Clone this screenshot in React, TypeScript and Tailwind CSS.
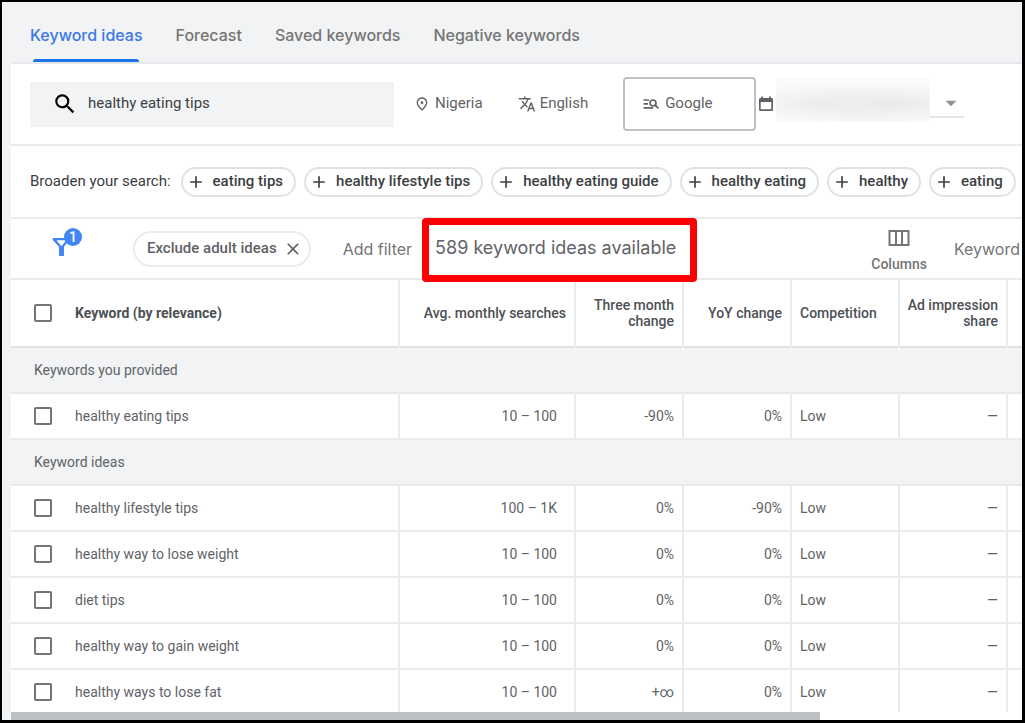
import { useState } from 'react';
import { MdAdd, MdArrowDropDown, MdClose, MdOutlinePlace, MdSearch, MdTranslate } from 'react-icons/md';

interface KeywordRow {
  keyword: string;
  searches: string;
  threeMonth: string;
  yoy: string;
  competition: string;
}

const TABS = ['Keyword ideas', 'Forecast', 'Saved keywords', 'Negative keywords'];

const SUGGESTIONS = [
  'eating tips',
  'healthy lifestyle tips',
  'healthy eating guide',
  'healthy eating',
  'healthy',
  'eating',
];

const PROVIDED: KeywordRow[] = [
  { keyword: 'healthy eating tips', searches: '10 – 100', threeMonth: '-90%', yoy: '0%', competition: 'Low' },
];

const IDEAS: KeywordRow[] = [
  { keyword: 'healthy lifestyle tips', searches: '100 – 1K', threeMonth: '0%', yoy: '-90%', competition: 'Low' },
  { keyword: 'healthy way to lose weight', searches: '10 – 100', threeMonth: '0%', yoy: '0%', competition: 'Low' },
  { keyword: 'diet tips', searches: '10 – 100', threeMonth: '0%', yoy: '0%', competition: 'Low' },
  { keyword: 'healthy way to gain weight', searches: '10 – 100', threeMonth: '0%', yoy: '0%', competition: 'Low' },
  { keyword: 'healthy ways to lose fat', searches: '10 – 100', threeMonth: '+∞', yoy: '0%', competition: 'Low' },
];

const CHECKBOX =
  'block size-[18px] appearance-none rounded-xs border-2 border-[#757575] bg-white checked:bg-[#1a73e8]';

function NetworkIcon() {
  return (
    <svg className="h-4 w-4" viewBox="0 0 16 16" fill="none" stroke="currentColor" strokeWidth="1.7" aria-hidden="true">
      <path d="M0.5 4H6M0.5 7.8H5M0.5 11.8H10" />
      <circle cx="10" cy="7" r="3" />
      <path d="M12.2 9.2L15.4 12.4" />
    </svg>
  );
}

function CalendarIcon() {
  return (
    <svg className="ml-0.5 h-4 w-4" viewBox="0 0 16 16" aria-hidden="true">
      <path
        fill="currentColor"
        fillRule="evenodd"
        d="M3.2 0.5H5V2H11V0.5H12.8V2H13.5C14.4 2 15 2.6 15 3.5V13.5C15 14.4 14.4 15 13.5 15H2.5C1.6 15 1 14.4 1 13.5V3.5C1 2.6 1.6 2 2.5 2H3.2ZM2.7 6V13.3H13.3V6Z"
      />
    </svg>
  );
}

function FilterIcon() {
  return (
    <svg className="h-5 w-5" viewBox="0 0 20 20" aria-hidden="true">
      <path
        fill="#4285f4"
        fillRule="evenodd"
        d="M1.6 1h14.8c1.1 0 1.5 1.1.9 1.9L12 9.8V18c0 .6-.4 1-1 1H8c-.6 0-1-.4-1-1V9.8L.8 2.9C.2 2.1.6 1 1.6 1zM4.4 3.2L9.5 9.2L14.2 3.2z"
      />
    </svg>
  );
}

function ColumnsIcon() {
  return (
    <svg className="h-4 w-[22px]" viewBox="0 0 22 16" fill="none" stroke="currentColor" strokeWidth="2" aria-hidden="true">
      <path d="M1.5 1H20.5V15H1.5ZM8 1V15M14 1V15" />
    </svg>
  );
}

function SectionRow({ title }: { title: string }) {
  return (
    <tr className="h-[46px] border-b-2 border-[#e8e9ec] bg-[#f1f3f4]">
      <th colSpan={8} scope="colgroup" className="pl-[23px] text-left font-normal">
        {title}
      </th>
    </tr>
  );
}

function DataRow({ row }: { row: KeywordRow }) {
  return (
    <tr className="h-[46px] border-b-2 border-[#ebecee]">
      <td className="pl-[23px]">
        <input type="checkbox" aria-label={`Select ${row.keyword}`} className={CHECKBOX} />
      </td>
      <td className="border-r-2 border-[#ebecee]">{row.keyword}</td>
      <td className="border-r-2 border-[#ebecee] pr-[17px] text-right">{row.searches}</td>
      <td className="border-r-2 border-[#ebecee] pr-2 text-right">{row.threeMonth}</td>
      <td className="border-r-2 border-[#ebecee] pr-2 text-right">{row.yoy}</td>
      <td className="border-r-2 border-[#ebecee] pl-2">{row.competition}</td>
      <td className="border-r-2 border-[#ebecee] pr-2 text-right">—</td>
      <td />
    </tr>
  );
}

export default function App() {
  const [activeTab, setActiveTab] = useState(TABS[0]);
  const [query, setQuery] = useState('healthy eating tips');

  return (
    <div className="flex h-screen flex-col overflow-hidden border-t-2 border-r-3 border-b-3 border-l-2 border-black bg-[#f1f3f4] pl-[9px] font-[Roboto,sans-serif] text-sm text-[#5f6368]">
      <nav className="flex h-[62px] shrink-0 gap-[33px] border-b-2 border-[#e6e8eb] pl-[19px] font-[Inter,sans-serif] text-base font-medium">
        {TABS.map((tab) => (
          <button
            key={tab}
            type="button"
            onClick={() => setActiveTab(tab)}
            className={
              tab === activeTab
                ? 'flex flex-col items-center whitespace-nowrap pt-[21px] text-[#3b78e7]'
                : 'flex flex-col items-center whitespace-nowrap pt-[21px] text-[#757575]'
            }
          >
            {tab}
            {tab === activeTab && <span className="mt-auto h-[3px] w-[106px] rounded-t bg-[#1a73e8]" />}
          </button>
        ))}
      </nav>

      <div className="flex h-[82px] shrink-0 items-center border-b-2 border-[#e9eaed] bg-white pl-[19px] text-[15px]">
        <label className="flex h-[45px] w-[364px] items-center gap-2.5 bg-[#f1f3f4] pl-[22px]">
          <MdSearch className="size-[26px] text-black" />
          <input
            type="text"
            aria-label="Keywords"
            value={query}
            onChange={(e) => setQuery(e.target.value)}
            className="min-w-0 flex-1 bg-transparent text-[#3c4043] outline-none"
          />
        </label>
        <button type="button" className="ml-5 flex items-center gap-[5px]">
          <MdOutlinePlace className="size-4" />
          Nigeria
        </button>
        <button type="button" className="ml-[35px] flex items-center gap-1">
          <MdTranslate className="size-[18px]" />
          English
        </button>
        <button
          type="button"
          className="ml-[35px] flex h-[54px] w-[133px] items-center gap-1.5 rounded border-2 border-[#bdc1c6] pl-[18px]"
        >
          <NetworkIcon />
          Google
        </button>
        <CalendarIcon />
        <div className="mt-[14px] ml-0.5 h-11 w-[154px] self-start bg-[#fbfbfb] bg-[radial-gradient(ellipse_at_30%_58%,#ececec,transparent_60%),radial-gradient(ellipse_at_75%_58%,#e9e9e9,transparent_60%)]" />
        <button
          type="button"
          aria-label="Choose date range"
          className="flex h-7 w-[34px] items-center justify-end border-b-2 border-[#e6e6e6] text-[#8c8f93]"
        >
          <MdArrowDropDown className="size-[26px]" />
        </button>
      </div>

      <div className="flex h-[73px] shrink-0 items-center gap-2 overflow-hidden border-b-2 border-[#e9eaed] bg-white pl-[19px] text-[15px] whitespace-nowrap text-[#3c4043]">
        <span className="mr-0.5">Broaden your search:</span>
        {SUGGESTIONS.map((suggestion) => (
          <button
            key={suggestion}
            type="button"
            className="flex h-[30px] shrink-0 items-center gap-[7px] rounded-full border-2 border-[#dfe1e5] pr-[11px] pl-[3px] font-medium"
          >
            <MdAdd className="size-5" />
            {suggestion}
          </button>
        ))}
      </div>

      <div className="flex h-[61px] shrink-0 items-center border-b-2 border-[#e9eaed] bg-white pr-0.5 pl-[41px] whitespace-nowrap">
        <button type="button" aria-label="Filters, 1 applied" className="relative pb-1">
          <FilterIcon />
          <span className="absolute -top-[9px] left-3 flex size-[18px] items-center justify-center rounded-full bg-[#4285f4] text-sm font-medium text-white">
            1
          </span>
        </button>
        <button
          type="button"
          className="ml-[61px] flex h-9 items-center gap-1.5 rounded-full border-2 border-[#ececee] pr-1.5 pl-3 text-[15px] font-medium"
        >
          Exclude adult ideas
          <MdClose className="size-5" />
        </button>
        <button type="button" className="ml-8 font-[Inter,sans-serif] text-base text-[#757575]">
          Add filter
        </button>
        <output className="relative z-10 -mt-px ml-2.5 flex h-16 w-[275px] shrink-0 items-center self-start rounded border-[7px] border-[#ff0000] pb-1 pl-1.5 font-[Inter,sans-serif] text-lg">
          589 keyword ideas available
        </output>
        <button
          type="button"
          className="ml-auto flex flex-col items-center gap-2 pt-1.5 font-medium text-[#757575]"
        >
          <ColumnsIcon />
          Columns
        </button>
        <button type="button" className="ml-[27px] font-[Inter,sans-serif] text-base text-[#757575]">
          Keyword
        </button>
      </div>

      <div className="min-h-0 flex-1 overflow-hidden bg-white">
        <table className="w-full table-fixed border-collapse">
          <colgroup>
            <col className="w-16" />
            <col />
            <col className="w-44" />
            <col className="w-[108px]" />
            <col className="w-[108px]" />
            <col className="w-[108px]" />
            <col className="w-[108px]" />
            <col className="w-[15px]" />
          </colgroup>
          <thead className="leading-4 text-[#4d5156]">
            <tr className="h-[67px] border-b-2 border-[#dfe1e5]">
              <th className="pl-[23px]">
                <input type="checkbox" aria-label="Select all keywords" className={CHECKBOX} />
              </th>
              <th className="border-r-2 border-[#ebecee] text-left font-bold">Keyword (by relevance)</th>
              <th className="border-r-2 border-[#ebecee] pr-2 text-right font-medium">Avg. monthly searches</th>
              <th className="border-r-2 border-[#ebecee] pr-2 text-right font-medium">Three month change</th>
              <th className="border-r-2 border-[#ebecee] pr-2 text-right font-medium">YoY change</th>
              <th className="border-r-2 border-[#ebecee] pl-2 text-left font-medium">Competition</th>
              <th className="border-r-2 border-[#ebecee] pr-2 text-right font-medium">Ad impression share</th>
              <th />
            </tr>
          </thead>
          <tbody>
            <SectionRow title="Keywords you provided" />
            {PROVIDED.map((row) => (
              <DataRow key={row.keyword} row={row} />
            ))}
            <SectionRow title="Keyword ideas" />
            {IDEAS.map((row) => (
              <DataRow key={row.keyword} row={row} />
            ))}
          </tbody>
        </table>
      </div>

      <div className="h-2 shrink-0 bg-white">
        <div className="h-full w-4/5 bg-[#bdc1c6]" />
      </div>
    </div>
  );
}
